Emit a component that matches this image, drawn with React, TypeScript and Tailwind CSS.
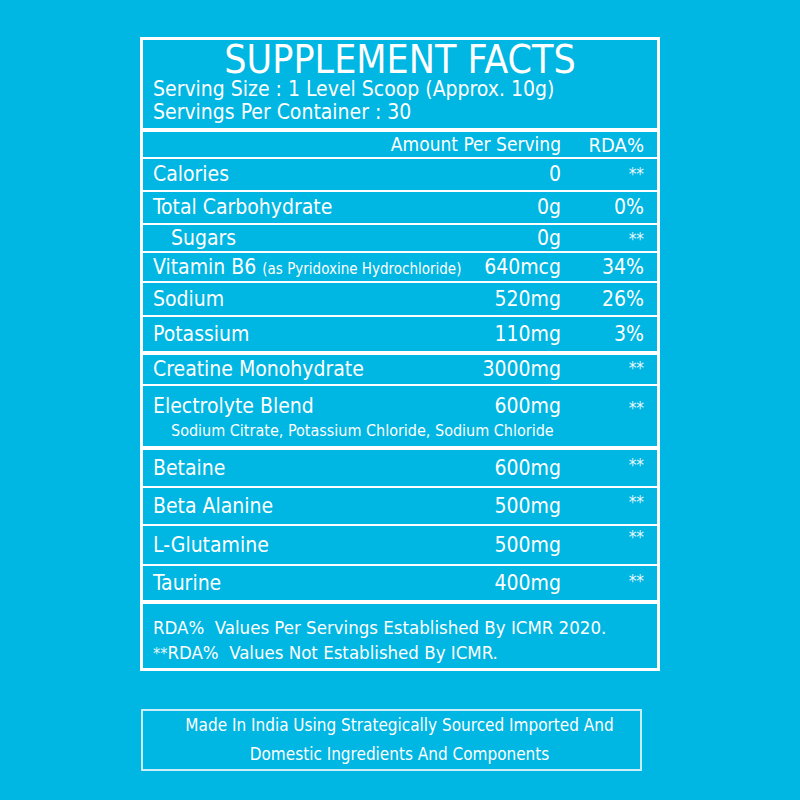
const font = "font-['DejaVu_Sans_Condensed','DejaVu_Sans',sans-serif]";

type Row = {
  name: string;
  note?: string;
  amount: string;
  rda: string;
  h: string;
  line: string;
  indent?: boolean;
  starTop?: string;
  sub?: string;
};

const rows: Row[] = [
  { name: "Calories", amount: "0", rda: "**", h: "h-[33px]", line: "border-b-2", starTop: "mt-[7px]" },
  { name: "Total Carbohydrate", amount: "0g", rda: "0%", h: "h-[33px]", line: "border-b-2" },
  { name: "Sugars", amount: "0g", rda: "**", h: "h-[28px]", line: "border-b-2", indent: true, starTop: "mt-[6px]" },
  { name: "Vitamin B6", note: "(as Pyridoxine Hydrochloride)", amount: "640mcg", rda: "34%", h: "h-[30px]", line: "border-b-2" },
  { name: "Sodium", amount: "520mg", rda: "26%", h: "h-[34px]", line: "border-b-2" },
  { name: "Potassium", amount: "110mg", rda: "3%", h: "h-[38px]", line: "border-b-4" },
  { name: "Creatine Monohydrate", amount: "3000mg", rda: "**", h: "h-[31px]", line: "border-b-2", starTop: "mt-[5px]" },
  {
    name: "Electrolyte Blend",
    amount: "600mg",
    rda: "**",
    h: "h-[64px]",
    line: "border-b-4",
    starTop: "mt-[7px]",
    sub: "Sodium Citrate, Potassium Chloride, Sodium Chloride",
  },
  { name: "Betaine", amount: "600mg", rda: "**", h: "h-[38px]", line: "border-b-2", starTop: "mt-[7px]" },
  { name: "Beta Alanine", amount: "500mg", rda: "**", h: "h-[38px]", line: "border-b-2", starTop: "mt-[6px]" },
  { name: "L-Glutamine", amount: "500mg", rda: "**", h: "h-[40px]", line: "border-b-2", starTop: "mt-[3px]" },
  { name: "Taurine", amount: "400mg", rda: "**", h: "h-[38px]", line: "border-b-4", starTop: "mt-[7px]" },
];

const Stars = ({ top }: { top?: string }) => (
  <span className={`w-[83px] self-start text-right text-[17px] leading-none text-[#e6f7fc] ${top ?? ""}`}>**</span>
);

const NutrientRow = ({ row }: { row: Row }) => {
  const star = row.rda === "**";
  if (row.sub) {
    return (
      <div className={`${row.h} ${row.line} border-white pl-[10px] pr-[13px] pt-[7px]`}>
        <div className="flex items-start">
          <span className="flex-1 text-[21px] leading-[26px]">{row.name}</span>
          <span className="text-[21px] leading-[26px] text-right">{row.amount}</span>
          <Stars top={row.starTop} />
        </div>
        <div className="pl-[18px] text-[16px] leading-[24px]">{row.sub}</div>
      </div>
    );
  }
  return (
    <div className={`${row.h} ${row.line} border-white pl-[10px] pr-[13px] flex items-center`}>
      <span className={`flex-1 text-[21px] leading-none ${row.indent ? "pl-[18px]" : ""}`}>
        {row.name}
        {row.note && <span className="text-[15px] ml-[6px]">{row.note}</span>}
      </span>
      <span className="text-[21px] leading-none text-right">{row.amount}</span>
      {star ? <Stars top={row.starTop} /> : <span className="w-[83px] text-right text-[21px] leading-none">{row.rda}</span>}
    </div>
  );
};

export default function App() {
  return (
    <div className={`w-[800px] h-[800px] bg-[#00b6e2] text-white ${font} pt-[37px]`}>
      <div className="ml-[140px] w-[520px] border-[3px] border-white">
        {/* header */}
        <div className="h-[92px] border-b-4 border-white">
          <div className="text-center text-[39px] leading-[39px]">SUPPLEMENT FACTS</div>
          <div className="pl-[10px] text-[21px] leading-[21px]">Serving Size : 1 Level Scoop (Approx. 10g)</div>
          <div className="pl-[10px] text-[21px] leading-[24px]">Servings Per Container : 30</div>
        </div>
        <div className="h-[27px] border-b-2 border-white pr-[13px] flex items-center justify-end text-[19px] leading-none">
          <span>Amount Per Serving</span>
          <span className="w-[83px] text-right text-[20px]">RDA%</span>
        </div>
        {rows.map((r) => (
          <NutrientRow key={r.name} row={r} />
        ))}
        {/* footnotes */}
        <div className="h-[64px] pl-[10px] pt-[11px] text-[18.5px] leading-[25px]">
          <div>RDA%&nbsp; Values Per Servings Established By ICMR 2020.</div>
          <div>
            <span className="text-[16px] text-[#e6f7fc]">**</span>RDA%&nbsp; Values Not Established By ICMR.
          </div>
        </div>
      </div>

      <div className="mt-[38px] ml-[141px] w-[501px] h-[62px] border-2 border-[#c9eef9] pl-[16px] flex flex-col justify-center items-center text-[17px] leading-[29px]">
        <div>Made In India Using Strategically Sourced Imported And</div>
        <div>Domestic Ingredients And Components</div>
      </div>
    </div>
  );
}
